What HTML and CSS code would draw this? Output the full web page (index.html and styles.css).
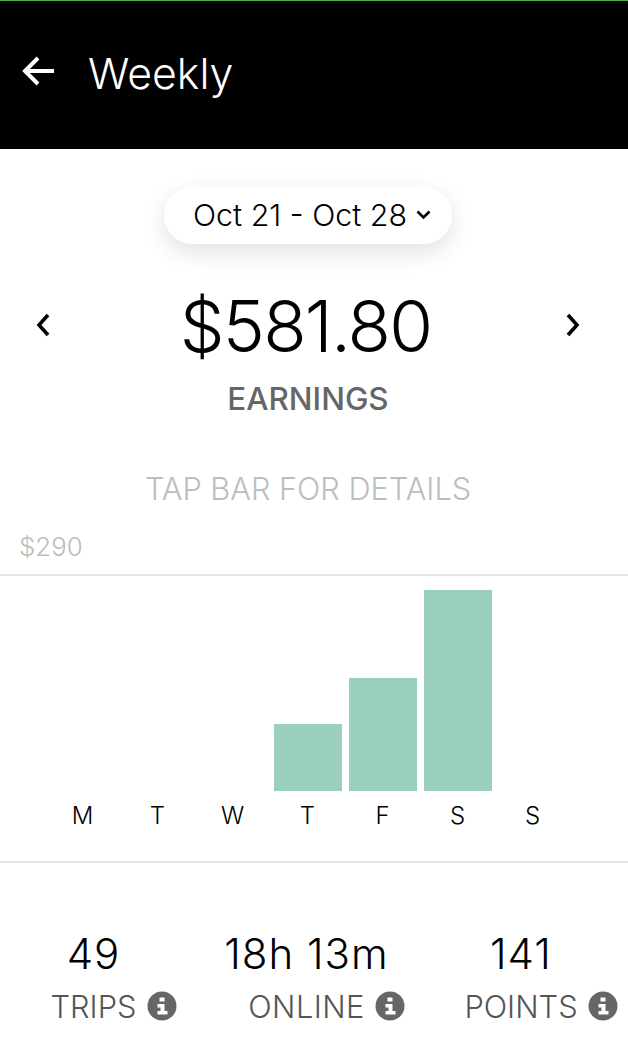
FILE: index.html
```html
<!doctype html>
<html lang="en">
<head>
    <meta charset="UTF-8">
    <title>Weekly</title>
    <link rel="stylesheet" href="styles.css">
</head>
<body>
    <header class="topbar">
        <svg class="back" width="34" height="32" viewBox="0 0 34 32"><path d="M33 16H4M17 3L4 16l13 13" fill="none" stroke="#fff" stroke-width="4"/></svg>
        <h1>Weekly</h1>
    </header>

    <div class="range-row">
        <div class="range">
            <span>Oct 21 - Oct 28</span>
            <svg width="15" height="10" viewBox="0 0 15 10"><path d="M1.5 1.5l6 6 6-6" fill="none" stroke="#000" stroke-width="2.6"/></svg>
        </div>
    </div>

    <div class="total">
        <svg class="step" width="16" height="24" viewBox="0 0 16 24"><path d="M13 2L4 12l9 10" fill="none" stroke="#000" stroke-width="3.6"/></svg>
        <div class="amount">$581.80</div>
        <svg class="step" width="16" height="24" viewBox="0 0 16 24"><path d="M3 2l9 10-9 10" fill="none" stroke="#000" stroke-width="3.6"/></svg>
    </div>
    <div class="earn">EARNINGS</div>
    <div class="hint">TAP BAR FOR DETAILS</div>
    <div class="max">$290</div>

    <section class="chart">
        <div class="col"><div class="bar-wrap"></div><span>M</span></div>
        <div class="col"><div class="bar-wrap"></div><span>T</span></div>
        <div class="col"><div class="bar-wrap"></div><span>W</span></div>
        <div class="col"><div class="bar-wrap"><div class="bar" style="height:67px"></div></div><span>T</span></div>
        <div class="col"><div class="bar-wrap"><div class="bar" style="height:113px"></div></div><span>F</span></div>
        <div class="col"><div class="bar-wrap"><div class="bar" style="height:201px"></div></div><span>S</span></div>
        <div class="col"><div class="bar-wrap"></div><span>S</span></div>
    </section>

    <section class="stats">
        <div class="stat">
            <div class="num">49</div>
            <div class="lbl">TRIPS<svg class="info" viewBox="0 0 30 30"><use href="#info"/></svg></div>
        </div>
        <div class="stat">
            <div class="num">18h 13m</div>
            <div class="lbl lbl-wide">ONLINE<svg class="info" viewBox="0 0 30 30"><use href="#info"/></svg></div>
        </div>
        <div class="stat">
            <div class="num">141</div>
            <div class="lbl">POINTS<svg class="info" viewBox="0 0 30 30"><use href="#info"/></svg></div>
        </div>
    </section>

    <svg width="0" height="0" class="defs">
        <symbol id="info" viewBox="0 0 30 30">
            <circle cx="15" cy="15" r="14.5" fill="#666"/>
            <rect x="12.5" y="6.5" width="5" height="4" fill="#fff"/>
            <path d="M10.5 13h7v7h3v3.5h-10V20h3v-3.5h-3z" fill="#fff"/>
        </symbol>
    </svg>
</body>
</html>
```

FILE: styles.css
```css
* { box-sizing: border-box; }
html, body { margin: 0; padding: 0; }
body { width: 628px; height: 1050px; overflow: hidden; background: #fff; color: #000; font-family: "Inter", "Liberation Sans", sans-serif; }

.topbar { height: 149px; background: #000; border-top: 1px solid #4caf50; display: flex; align-items: center; padding: 0 0 0 21px; color: #fff; }
.topbar .back { margin-top: -9px; }
.topbar h1 { margin: -3px 0 0 33px; font-size: 42.8px; font-weight: 300; line-height: 50px; }

.range-row { display: flex; justify-content: center; padding: 38px 12px 0 0; }
.range { width: 288px; height: 57px; border-radius: 29px; background: #fff; box-shadow: 0 8px 24px rgba(0,0,0,.12); display: flex; align-items: center; padding: 0 0 2px 29px; gap: 9px; font-size: 30.4px; font-weight: 300; }

.total { display: flex; justify-content: space-between; align-items: center; padding: 0 47px 0 35px; margin-top: 38px; height: 88px; }
.step { margin-top: -3px; }
.amount { font-size: 71px; font-weight: 300; line-height: 88px; letter-spacing: -1.8px; margin: -1px 5px 0 0; }
.earn { text-align: center; padding-right: 12px; font-size: 31.4px; font-weight: 500; color: #666; line-height: 40px; margin-top: 9px; }
.hint { text-align: center; padding-right: 12px; font-size: 30.7px; font-weight: 300; color: #bdbdbd; line-height: 40px; margin-top: 50px; }
.max { padding-left: 19px; font-size: 25.8px; font-weight: 300; color: #bdbdbd; line-height: 32px; margin-top: 22px; margin-bottom: -1px; }

.chart { margin-top: 12px; height: 289px; border-top: 2px solid #e4e4e4; border-bottom: 2px solid #e4e4e4; display: grid; grid-template-columns: repeat(7, 75px); padding-left: 45px; }
.col { display: flex; flex-direction: column; align-items: center; }
.bar-wrap { height: 215px; width: 68px; display: flex; align-items: flex-end; }
.bar { width: 100%; background: #99cfbc; }
.col span { margin-top: 10px; font-size: 24px; font-weight: 300; line-height: 30px; }

.stats { display: grid; grid-template-columns: 187px 239px 190px; margin-top: 66px; text-align: center; }
.num { font-size: 42px; font-weight: 300; line-height: 50px; letter-spacing: 1px; }
.lbl { display: inline-block; position: relative; font-size: 30.8px; font-weight: 300; line-height: 40px; color: #555; margin-top: 8px; }
.lbl-wide { letter-spacing: .4px; }
.info { position: absolute; left: 100%; top: 4px; margin-left: 10px; width: 30px; height: 30px; }
.defs { position: absolute; }
```
